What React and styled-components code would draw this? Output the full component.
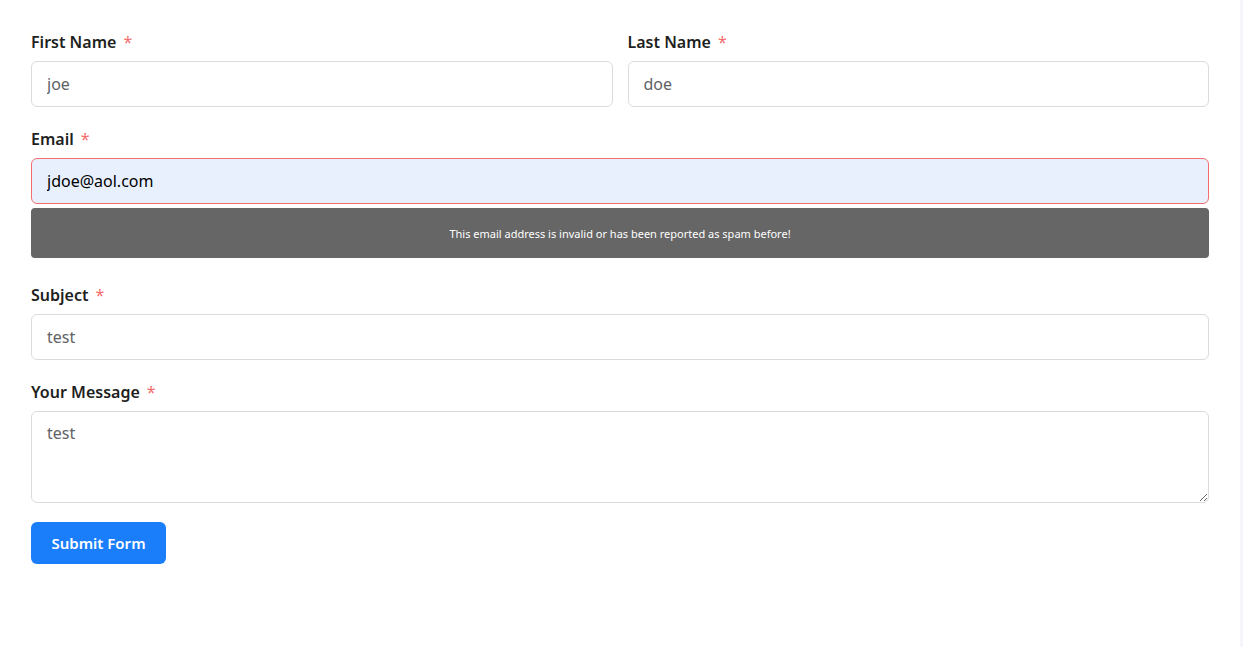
import React from "react";
import styled, { createGlobalStyle } from "styled-components";

const Global = createGlobalStyle`
  body { margin: 0; background: #fff; font-family: "Noto Sans", "Open Sans", sans-serif; }
  * { box-sizing: border-box; }
`;

const Page = styled.div`
  width: 1243px;
  min-height: 647px;
  padding: 31px 34px 0 31px;
  border-right: 3px solid #f4f6fb;
`;

const Form = styled.form`
  display: flex;
  flex-direction: column;
  width: 1178px;
`;

const Row = styled.div`
  display: flex;
  gap: 15px;
`;

const Field = styled.div`
  flex: 1;
  display: flex;
  flex-direction: column;
  margin-bottom: ${(p) => p.mb || 21}px;
`;

const Label = styled.label`
  font-size: 16px;
  font-weight: 600;
  color: #1e1f21;
  line-height: 22px;
  margin-bottom: 8px;

  span {
    color: #f56c6c;
    margin-left: 7px;
    font-weight: 400;
  }
`;

const Input = styled.input`
  height: 46px;
  border: 1px solid ${(p) => (p.error ? "#f56c6c" : "#dadbdd")};
  border-radius: 6px;
  background: ${(p) => (p.error ? "#e8f0fe" : "#fff")};
  padding: 0 15px;
  font-family: inherit;
  font-size: 16px;
  color: ${(p) => (p.error ? "#000" : "#606266")};
  outline: none;
`;

const TextArea = styled.textarea`
  height: 92px;
  border: 1px solid #dadbdd;
  border-radius: 6px;
  padding: 10px 15px;
  font-family: inherit;
  font-size: 16px;
  color: #606266;
  outline: none;
`;

const ErrorBox = styled.div`
  margin-top: 4px;
  height: 50px;
  background: #666;
  border-radius: 4px;
  color: #fff;
  font-size: 11px;
  display: flex;
  align-items: center;
  justify-content: center;
`;

const Button = styled.button`
  align-self: flex-start;
  width: 135px;
  height: 42px;
  background: #1a7efb;
  color: #fff;
  border: none;
  border-radius: 6px;
  font-family: inherit;
  font-size: 15px;
  font-weight: 600;
  margin-top: -1px;
`;

export default function App() {
  return (
    <Page>
      <Global />
      <Form onSubmit={(e) => e.preventDefault()}>
        <Row>
          <Field>
            <Label>First Name<span>*</span></Label>
            <Input defaultValue="joe" />
          </Field>
          <Field>
            <Label>Last Name<span>*</span></Label>
            <Input defaultValue="doe" />
          </Field>
        </Row>
        <Field mb={26}>
          <Label>Email<span>*</span></Label>
          <Input error defaultValue="jdoe@aol.com" />
          <ErrorBox>This email address is invalid or has been reported as spam before!</ErrorBox>
        </Field>
        <Field>
          <Label>Subject<span>*</span></Label>
          <Input defaultValue="test" />
        </Field>
        <Field mb={20}>
          <Label>Your Message<span>*</span></Label>
          <TextArea defaultValue="test" />
        </Field>
        <Button type="submit">Submit Form</Button>
      </Form>
    </Page>
  );
}
